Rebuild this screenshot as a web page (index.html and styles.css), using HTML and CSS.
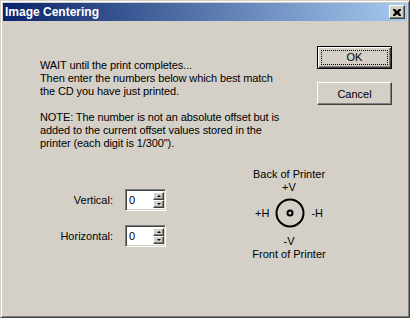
FILE: index.html
```html
<!DOCTYPE html>
<html lang="en">
<head>
    <meta charset="UTF-8">
    <title>Image Centering</title>
    <link rel="stylesheet" href="styles.css">
</head>
<body>
    <div class="window">
        <div class="titlebar">
            <span class="title">Image Centering</span>
            <button class="close">
                <svg width="8" height="7" viewBox="0 0 8 7"><path d="M0 0h2l2 2 2-2h2v1L6 3.5 8 6v1H6L4 5 2 7H0V6l2-2.5L0 1z" fill="#000"/></svg>
            </button>
        </div>
        <div class="content">
            <div class="main">
                <div class="message">
                    <p>WAIT until the print completes...<br>Then enter the numbers below which best match<br>the CD you have just printed.</p>
                    <p>NOTE: The number is not an absolute offset but is<br>added to the current offset values stored in the<br>printer (each digit is 1/300").</p>
                </div>
                <div class="bottom">
                    <div class="fields">
                        <div class="field">
                            <label>Vertical:</label>
                            <div class="spin">
                                <input type="text" value="0">
                                <div class="arrows"><span class="arrow up"></span><span class="arrow down"></span></div>
                            </div>
                        </div>
                        <div class="field">
                            <label>Horizontal:</label>
                            <div class="spin">
                                <input type="text" value="0">
                                <div class="arrows"><span class="arrow up"></span><span class="arrow down"></span></div>
                            </div>
                        </div>
                    </div>
                    <div class="diagram">
                        <div>Back of Printer</div>
                        <div>+V</div>
                        <div class="axis">
                            <span>+H</span>
                            <svg width="30" height="30" viewBox="0 0 30 30">
                                <circle cx="15" cy="15" r="13.5" fill="none" stroke="#000" stroke-width="2"/>
                                <circle cx="15" cy="15" r="2.5" fill="none" stroke="#000" stroke-width="2"/>
                            </svg>
                            <span>-H</span>
                        </div>
                        <div>-V</div>
                        <div>Front of Printer</div>
                    </div>
                </div>
            </div>
            <div class="buttons">
                <button class="btn default"><span class="focus">OK</span></button>
                <button class="btn">Cancel</button>
            </div>
        </div>
    </div>
</body>
</html>
```

FILE: styles.css
```css
body {
    margin: 0;
    font-family: 'Liberation Sans', Arial, sans-serif;
    font-size: 11px;
    color: #000;
}
.window {
    width: 410px;
    height: 318px;
    box-sizing: border-box;
    background-color: #d4d0c8;
    border: 1px solid;
    border-color: #d4d0c8 #404040 #404040 #d4d0c8;
    box-shadow: inset 1px 1px #fff, inset -1px -1px #808080;
    padding: 2px;
}
.titlebar {
    height: 18px;
    display: flex;
    align-items: center;
    justify-content: space-between;
    background: linear-gradient(to right, #0a246a, #a6caf0);
    padding: 0 2px;
}
.title {
    color: #fff;
    font-weight: bold;
    font-size: 12px;
}
.close {
    width: 16px;
    height: 14px;
    box-sizing: border-box;
    padding: 0;
    background-color: #d4d0c8;
    border: 1px solid;
    border-color: #fff #404040 #404040 #fff;
    box-shadow: inset -1px -1px #808080;
    display: flex;
    align-items: center;
    justify-content: center;
}
.content {
    display: flex;
    justify-content: space-between;
    padding: 25px 15px 0 37px;
}
.main {
    flex: 1;
    min-width: 0;
}
.message {
    padding-top: 13px;
    letter-spacing: -0.1px;
}
.message p {
    margin: 0 0 13px;
    line-height: 13px;
}
.message p:last-child {
    margin-bottom: 0;
}
.bottom {
    display: flex;
    margin-top: 18px;
}
.fields {
    margin: 21px 0 0 13px;
    display: flex;
    flex-direction: column;
    gap: 14px;
}
.field {
    display: flex;
    align-items: center;
    gap: 12px;
}
.field label {
    width: 60px;
    text-align: right;
}
.spin {
    display: flex;
    width: 41px;
    height: 22px;
    box-sizing: border-box;
    border: 1px solid;
    border-color: #808080 #fff #fff #808080;
    box-shadow: inset 1px 1px #404040, inset -1px -1px #d4d0c8;
    padding: 2px;
    background-color: #fff;
}
.spin input {
    width: 24px;
    border: 0;
    padding: 0 0 0 1px;
    margin: 0;
    font: inherit;
    outline: none;
    background: transparent;
}
.arrows {
    margin-left: auto;
    display: flex;
    flex-direction: column;
}
.arrow {
    width: 11px;
    height: 9px;
    box-sizing: border-box;
    background-color: #d4d0c8;
    border: 1px solid;
    border-color: #fff #404040 #404040 #fff;
    box-shadow: inset -1px -1px #808080;
    display: flex;
    align-items: center;
    justify-content: center;
}
.arrow::after {
    content: '';
    border-left: 2px solid transparent;
    border-right: 2px solid transparent;
}
.up::after {
    border-bottom: 2px solid #000;
}
.down::after {
    border-top: 2px solid #000;
}
.diagram {
    margin-left: 83px;
    flex: none;
    width: 80px;
    display: flex;
    flex-direction: column;
    align-items: center;
    line-height: 13px;
}
.axis {
    display: flex;
    align-items: center;
    gap: 6px;
    margin: 4px 0 7px;
}
.buttons {
    flex: none;
    display: flex;
    flex-direction: column;
    gap: 13px;
}
.btn {
    width: 75px;
    height: 23px;
    box-sizing: border-box;
    padding: 0;
    background-color: #d4d0c8;
    border: 1px solid;
    border-color: #fff #404040 #404040 #fff;
    box-shadow: inset -1px -1px #808080;
    font: inherit;
    color: #000;
}
.btn.default {
    border-color: #000;
    box-shadow: inset 1px 1px #fff, inset -1px -1px #404040, inset -2px -2px #808080;
}
.focus {
    display: block;
    height: 15px;
    margin: 0 3px;
    box-sizing: border-box;
    border: 1px dotted #000;
    line-height: 13px;
}
```
